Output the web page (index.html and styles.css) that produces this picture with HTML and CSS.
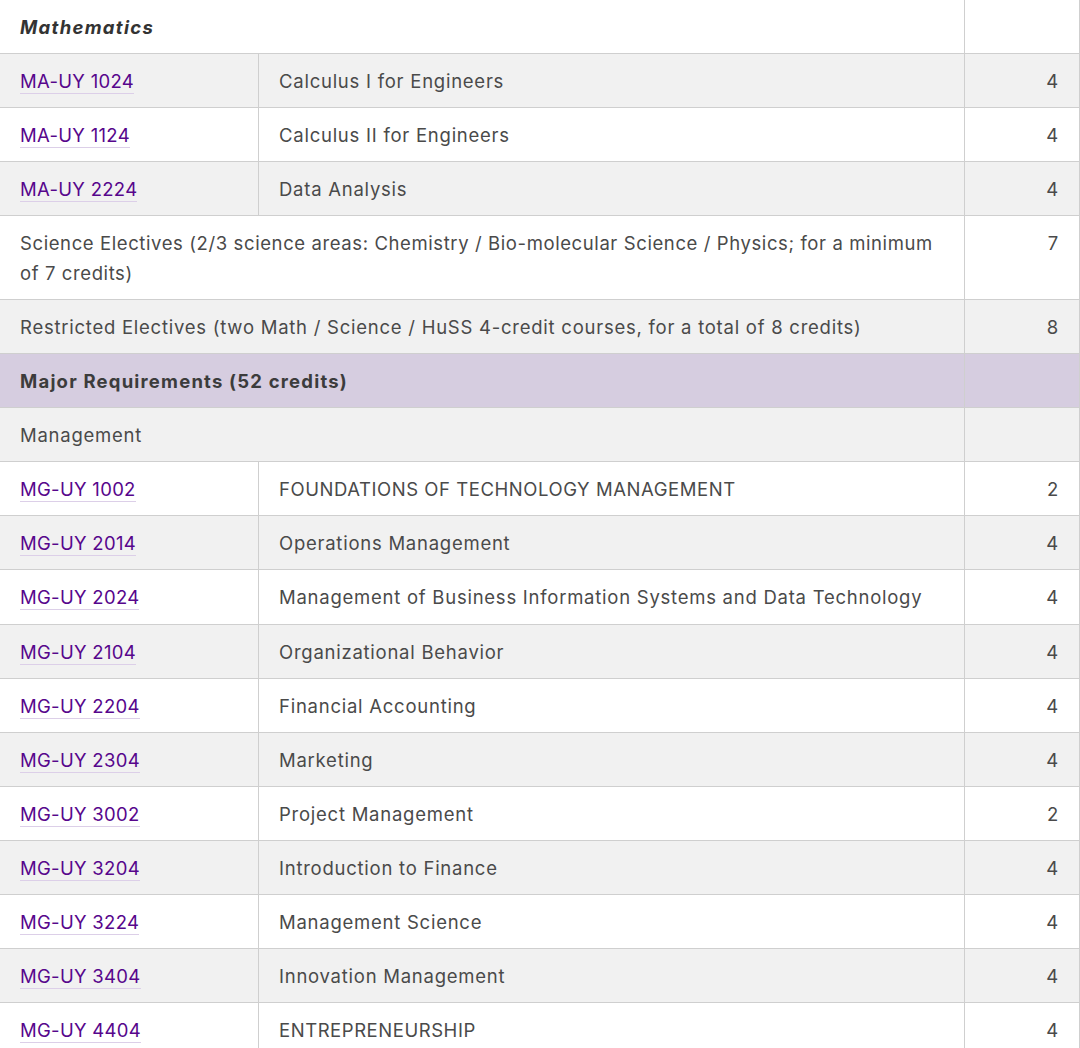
FILE: index.html
```html
<!DOCTYPE html>
<html>
<head>
<meta charset="utf-8">
<link rel="stylesheet" href="styles.css">
</head>
<body>
<table class="req">
  <colgroup><col class="c1"><col class="c2"><col class="c3"></colgroup>
  <tbody>
    <tr class="w"><td colspan="2" class="area">Mathematics</td><td class="num"></td></tr>
    <tr class="g"><td><a href="#">MA-UY 1024</a></td><td>Calculus I for Engineers</td><td class="num">4</td></tr>
    <tr class="w"><td><a href="#">MA-UY 1124</a></td><td>Calculus II for Engineers</td><td class="num">4</td></tr>
    <tr class="g"><td><a href="#">MA-UY 2224</a></td><td>Data Analysis</td><td class="num">4</td></tr>
    <tr class="w"><td colspan="2" class="wide">Science Electives (2/3 science areas: Chemistry / Bio-molecular Science / Physics; for a minimum of 7 credits)</td><td class="num">7</td></tr>
    <tr class="g"><td colspan="2">Restricted Electives (two Math / Science / HuSS 4-credit courses, for a total of 8 credits)</td><td class="num">8</td></tr>
    <tr class="hdr"><td colspan="2">Major Requirements (52 credits)</td><td class="num"></td></tr>
    <tr class="g"><td colspan="2">Management</td><td class="num"></td></tr>
    <tr class="w"><td><a href="#">MG-UY 1002</a></td><td class="caps">FOUNDATIONS OF TECHNOLOGY MANAGEMENT</td><td class="num">2</td></tr>
    <tr class="g"><td><a href="#">MG-UY 2014</a></td><td>Operations Management</td><td class="num">4</td></tr>
    <tr class="w"><td><a href="#">MG-UY 2024</a></td><td>Management of Business Information Systems and Data Technology</td><td class="num">4</td></tr>
    <tr class="g"><td><a href="#">MG-UY 2104</a></td><td>Organizational Behavior</td><td class="num">4</td></tr>
    <tr class="w"><td><a href="#">MG-UY 2204</a></td><td>Financial Accounting</td><td class="num">4</td></tr>
    <tr class="g"><td><a href="#">MG-UY 2304</a></td><td>Marketing</td><td class="num">4</td></tr>
    <tr class="w"><td><a href="#">MG-UY 3002</a></td><td>Project Management</td><td class="num">2</td></tr>
    <tr class="g"><td><a href="#">MG-UY 3204</a></td><td>Introduction to Finance</td><td class="num">4</td></tr>
    <tr class="w"><td><a href="#">MG-UY 3224</a></td><td>Management Science</td><td class="num">4</td></tr>
    <tr class="g"><td><a href="#">MG-UY 3404</a></td><td>Innovation Management</td><td class="num">4</td></tr>
    <tr class="w"><td><a href="#">MG-UY 4404</a></td><td class="caps">ENTREPRENEURSHIP</td><td class="num">4</td></tr>
  </tbody>
</table>
</body>
</html>
```

FILE: styles.css
```css
html, body {
  margin: 0;
  padding: 0;
  background: #ffffff;
  overflow: hidden;
}

.req {
  border-collapse: collapse;
  table-layout: fixed;
  width: 1081px;
  margin: -1px 0 0 -1px;
  font-family: Inter, "Open Sans", "Liberation Sans", sans-serif;
  font-size: 18.5px;
  letter-spacing: 0.75px;
  line-height: 30px;
  color: #4a4a4a;
}

.c1 { width: 259px; }
.c3 { width: 115px; }

.req td {
  border: 1px solid #cfcfcf;
  padding: 12px 20px 11.06px 20px;
  vertical-align: top;
  text-align: left;
}

.req td.num {
  text-align: right;
}

.req td.caps {
  letter-spacing: 0.55px;
}

.req td.wide {
  letter-spacing: 0.6px;
}

.w { background: #ffffff; }
.g { background: #f1f1f1; }
.hdr { background: #d6cde0; }

.hdr td {
  font-weight: 700;
  color: #3c3c3c;
  letter-spacing: 1.2px;
}

.req td.area {
  font-weight: 700;
  font-style: italic;
  color: #333333;
  letter-spacing: 1.3px;
}

.req a {
  color: #57068c;
  text-decoration: none;
  letter-spacing: 0.3px;
  border-bottom: 1px solid #dccfe8;
  padding-bottom: 1px;
}
```
